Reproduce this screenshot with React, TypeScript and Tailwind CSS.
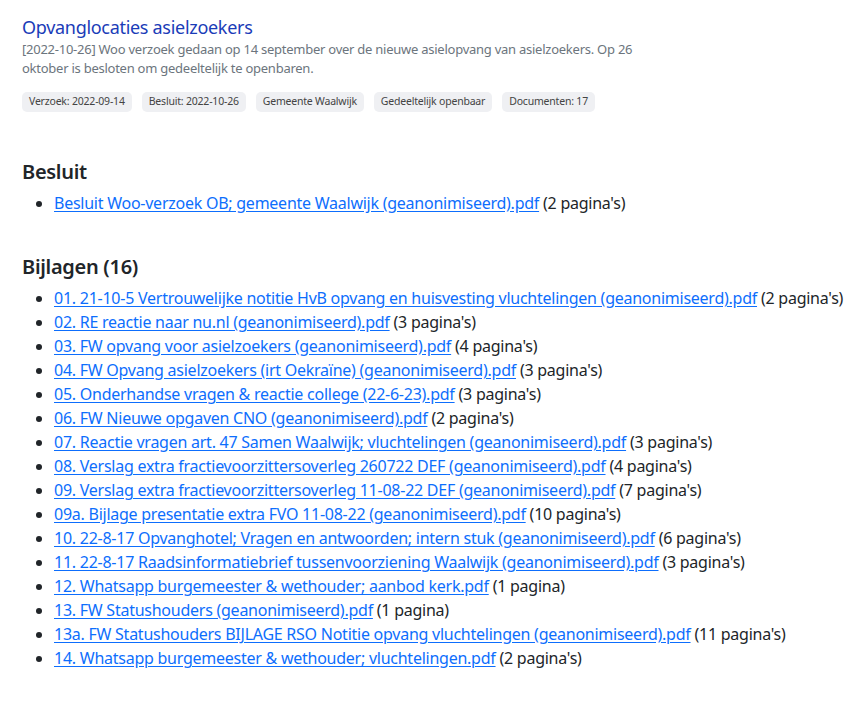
import React from "react";

const chips = [
  "Verzoek: 2022-09-14",
  "Besluit: 2022-10-26",
  "Gemeente Waalwijk",
  "Gedeeltelijk openbaar",
  "Documenten: 17",
];

const bijlagen: [string, string][] = [
  ["01. 21-10-5 Vertrouwelijke notitie HvB opvang en huisvesting vluchtelingen (geanonimiseerd).pdf", "(2 pagina's)"],
  ["02. RE reactie naar nu.nl (geanonimiseerd).pdf", "(3 pagina's)"],
  ["03. FW opvang voor asielzoekers (geanonimiseerd).pdf", "(4 pagina's)"],
  ["04. FW Opvang asielzoekers (irt Oekraïne) (geanonimiseerd).pdf", "(3 pagina's)"],
  ["05. Onderhandse vragen & reactie college (22-6-23).pdf", "(3 pagina's)"],
  ["06. FW Nieuwe opgaven CNO (geanonimiseerd).pdf", "(2 pagina's)"],
  ["07. Reactie vragen art. 47 Samen Waalwijk; vluchtelingen (geanonimiseerd).pdf", "(3 pagina's)"],
  ["08. Verslag extra fractievoorzittersoverleg 260722 DEF (geanonimiseerd).pdf", "(4 pagina's)"],
  ["09. Verslag extra fractievoorzittersoverleg 11-08-22 DEF (geanonimiseerd).pdf", "(7 pagina's)"],
  ["09a. Bijlage presentatie extra FVO 11-08-22 (geanonimiseerd).pdf", "(10 pagina's)"],
  ["10. 22-8-17 Opvanghotel; Vragen en antwoorden; intern stuk (geanonimiseerd).pdf", "(6 pagina's)"],
  ["11. 22-8-17 Raadsinformatiebrief tussenvoorziening Waalwijk (geanonimiseerd).pdf", "(3 pagina's)"],
  ["12. Whatsapp burgemeester & wethouder; aanbod kerk.pdf", "(1 pagina)"],
  ["13. FW Statushouders (geanonimiseerd).pdf", "(1 pagina)"],
  ["13a. FW Statushouders BIJLAGE RSO Notitie opvang vluchtelingen (geanonimiseerd).pdf", "(11 pagina's)"],
  ["14. Whatsapp burgemeester & wethouder; vluchtelingen.pdf", "(2 pagina's)"],
];

function Item({ name, pages }: { name: string; pages: string }) {
  return (
    <li className="leading-[24px] whitespace-nowrap">
      <a href="#" className="text-[#0d6efd] underline underline-offset-2">
        {name}
      </a>{" "}
      <span className="text-[#212529]">{pages}</span>
    </li>
  );
}

export default function App() {
  return (
    <div
      className="bg-white min-h-[722px] px-[22px] pt-[15px] text-[#212529]"
      style={{ fontFamily: '"Noto Sans", "Open Sans", sans-serif' }}
    >
      <h1 className="text-[18px] leading-[24px] tracking-[-0.3px] text-[#1a3cb8]">Opvanglocaties asielzoekers</h1>
      <p className="text-[13px] leading-[19px] tracking-[-0.25px] text-[#6c757d] max-w-[616px] mt-[1px]">
        [2022-10-26] Woo verzoek gedaan op 14 september over de nieuwe asielopvang van asielzoekers. Op 26
        oktober is besloten om gedeeltelijk te openbaren.
      </p>
      <div className="flex gap-[10px] mt-[14px]">
        {chips.map((c) => (
          <span
            key={c}
            className="bg-[#eff0f3] rounded-[5px] px-[7px] h-[20px] flex items-center text-[10.5px] tracking-[-0.2px] text-[#444]"
          >
            {c}
          </span>
        ))}
      </div>

      <h2 className="text-[20px] leading-[26px] tracking-[-0.3px] font-semibold mt-[47px]">Besluit</h2>
      <ul className="list-disc pl-[32px] mt-[6px] text-[16px] tracking-[-0.25px]">
        <Item name="Besluit Woo-verzoek OB; gemeente Waalwijk (geanonimiseerd).pdf" pages="(2 pagina's)" />
      </ul>

      <h2 className="text-[20px] leading-[26px] tracking-[-0.3px] font-semibold mt-[39px]">Bijlagen (16)</h2>
      <ul className="list-disc pl-[32px] mt-[6px] text-[16px] tracking-[-0.25px]">
        {bijlagen.map(([n, p]) => (
          <Item key={n} name={n} pages={p} />
        ))}
      </ul>
    </div>
  );
}
